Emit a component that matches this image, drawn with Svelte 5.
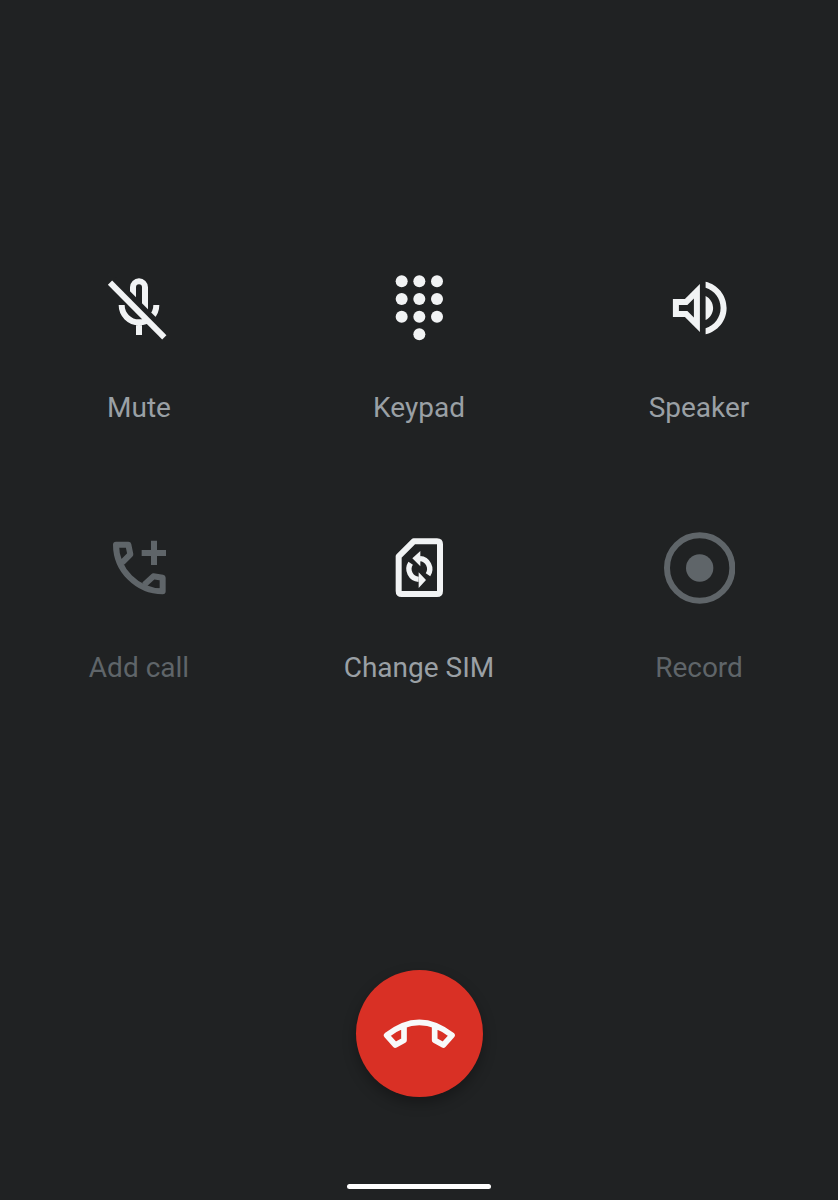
<script lang="ts">
  /**
   * In-call screen: a grid of call actions, the hang-up button
   * and the system home indicator.
   */

  interface Action {
    id: string;
    label: string;
    disabled?: boolean;
  }

  const actions: Action[] = [
    { id: "mute", label: "Mute" },
    { id: "keypad", label: "Keypad" },
    { id: "speaker", label: "Speaker" },
    { id: "add", label: "Add call", disabled: true },
    { id: "sim", label: "Change SIM" },
    { id: "record", label: "Record", disabled: true },
  ];

  const keypadDots = [28, 81, 134].flatMap((y) => [56, 109, 162].map((x) => ({ x, y })));
</script>

<main class="call-screen">
  <div class="actions">
    {#each actions as action (action.id)}
      <button type="button" class="action" disabled={action.disabled}>
        {#if action.id === "speaker"}
          <svg class="icon" viewBox="0 0 24 24" fill="currentColor" aria-hidden="true">
            <path
              d="M3.3 9v6h4l5 5V4l-5 5h-4zm7-.17v6.34L8.13 13H5.3v-2h2.83l2.17-2.17zM16.7 12c0-1.77-1.02-3.29-2.5-4.03v8.05c1.48-.73 2.5-2.25 2.5-4.02zM14.2 3.23v2.06c2.89.86 5 3.54 5 6.71s-2.11 5.85-5 6.71v2.06c4.01-.91 7-4.49 7-8.77s-2.99-7.86-7-8.77z"
            ></path>
          </svg>
        {:else}
          <svg
            class="icon"
            viewBox="0 0 216 216"
            fill="none"
            stroke="currentColor"
            stroke-width="18"
            aria-hidden="true"
          >
            {#if action.id === "mute"}
              <path d="M90 82V46A18 18 0 0 1 126 46V118"></path>
              <path d="M56 99A52 52 0 0 0 160 99M108 150V189"></path>
              <path class="gap" d="M32 21L195 185"></path>
              <path d="M21 32L184 196"></path>
            {:else if action.id === "keypad"}
              <g fill="currentColor" stroke="none">
                {#each keypadDots as dot}
                  <circle cx={dot.x} cy={dot.y} r="18"></circle>
                {/each}
                <circle cx="109" cy="187" r="18"></circle>
              </g>
            {:else if action.id === "add"}
              <path
                stroke-linejoin="round"
                d="M58 91L82 67L76 38H39C39 114 103 178 179 178V137L151 133L124 158"
              ></path>
              <path d="M153 26V99M116 63H189"></path>
            {:else if action.id === "sim"}
              <path
                stroke-linejoin="round"
                d="M92 28H162Q171 28 171 37V177Q171 186 162 186H56Q47 186 47 177V73Z"
              ></path>
              <g stroke-width="16">
                <path d="M111 80A31 31 0 0 1 135 128"></path>
                <path d="M107 142A31 31 0 0 1 83 94"></path>
              </g>
              <path fill="currentColor" stroke="none" d="M88 79L112 57V103ZM129 144L107 121V168Z"></path>
            {:else}
              <circle cx="110" cy="108" r="98"></circle>
              <circle cx="110" cy="108" r="41" fill="currentColor" stroke="none"></circle>
            {/if}
          </svg>
        {/if}
        <span class="label">{action.label}</span>
      </button>
    {/each}
  </div>

  <button type="button" class="end-call" aria-label="End call">
    <svg
      class="icon"
      viewBox="0 0 216 216"
      fill="none"
      stroke="currentColor"
      stroke-width="17"
      stroke-linejoin="round"
      aria-hidden="true"
    >
      <path d="M63 84V127L37 141L11 112Q109 34 207 112L181 141L155 127V84"></path>
    </svg>
  </button>

  <div class="home-indicator"></div>
</main>

<style>
  :global(body) {
    margin: 0;
    background-color: #202223;
  }

  .call-screen {
    display: flex;
    flex-direction: column;
    align-items: center;
    box-sizing: border-box;
    min-height: 100vh;
    padding: 272px 0 11px;
    background-color: #202223;
    font-family: Roboto, "Liberation Sans", sans-serif;
  }

  .actions {
    display: grid;
    grid-template-columns: repeat(3, 1fr);
    gap: 108px 2px;
    width: 100%;
  }

  .action {
    display: flex;
    flex-direction: column;
    align-items: center;
    gap: 48px;
    padding: 0;
    background: transparent;
    border: none;
    color: #f1f3f4;
    font-family: inherit;
    cursor: pointer;
  }

  .icon {
    display: block;
    width: 72px;
    height: 72px;
  }

  .gap {
    stroke: #202223;
  }

  .label {
    color: #9aa0a5;
    font-size: 28px;
    line-height: 32px;
    white-space: nowrap;
  }

  .action:disabled,
  .action:disabled .label {
    color: #5f6569;
    cursor: default;
  }

  .end-call {
    display: flex;
    align-items: center;
    justify-content: center;
    width: 127px;
    height: 127px;
    margin-top: auto;
    padding: 0;
    background-color: #d93025;
    border: none;
    border-radius: 50%;
    box-shadow: 0 6px 14px rgba(0, 0, 0, 0.3);
    color: #f8f9fa;
    cursor: pointer;
  }

  .home-indicator {
    width: 144px;
    height: 5px;
    margin-top: 87px;
    background-color: #fff;
    border-radius: 3px;
  }
</style>
